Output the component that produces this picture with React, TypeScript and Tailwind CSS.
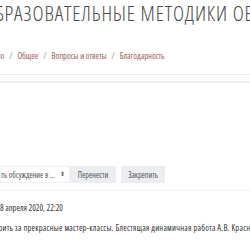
import React from "react";

export default function App() {
  return (
    <div className="w-[250px] h-[250px] overflow-hidden bg-white font-stretch-condensed" style={{ fontFamily: '"Open Sans", "Noto Sans", sans-serif' }}>
      <div className="-mt-[1px] ml-[-17px] whitespace-nowrap h-[28px] text-[21px] leading-[28px] font-light text-[#4b4b4b] tracking-[0.85px]">
        ОБРАЗОВАТЕЛЬНЫЕ МЕТОДИКИ ОБУЧЕНИЯ
      </div>
      <div className="mt-[23px] ml-[-30px] whitespace-nowrap h-[12px] text-[8.5px] leading-[12px] text-[#9c5a52] flex gap-[5px]">
        <span>Портфолио</span>
        <span className="text-[#888]">/</span>
        <span>Общее</span>
        <span className="text-[#888]">/</span>
        <span>Вопросы и ответы</span>
        <span className="text-[#888]">/</span>
        <span>Благодарность</span>
      </div>
      <div className="mt-[12px] border-t border-[#ececec]" />
      <div className="mt-[6px] border-t-2 border-[#f1f1f1]" />
      <div className="mt-[83px] flex items-center gap-[5px] whitespace-nowrap text-[8px] text-[#555]">
        <div className="h-[17px] w-[70px] shrink-0 flex items-center justify-end overflow-hidden border border-[#f0f0f0] bg-white">
          <span className="shrink-0">Переместить обсуждение в ...</span>
          <span className="shrink-0 ml-[5px] mr-[4px] text-[6px] text-[#666]">⬍</span>
        </div>
        <div className="h-[17px] w-[46px] -ml-[5px] shrink-0 flex items-center justify-center bg-[#ebedf0]">Перенести</div>
        <div className="h-[17px] w-[44px] shrink-0 flex items-center justify-center bg-[#ebedf0]">Закрепить</div>
      </div>
      <div className="mt-[7px] border-t border-[#f4f4f4]" />
      <div className="mt-[11px] h-[12px] text-[8.5px] leading-[12px] text-[#333] whitespace-nowrap">8 апреля 2020, 22:20</div>
      <div className="mt-[8px] ml-[-52px] h-[12px] text-[8.5px] leading-[12px] text-[#333] whitespace-nowrap tracking-[0.2px]">
        Хочу поблагодарить за прекрасные мастер-классы. Блестящая динамичная работа А.В. Красновой
      </div>
    </div>
  );
}
